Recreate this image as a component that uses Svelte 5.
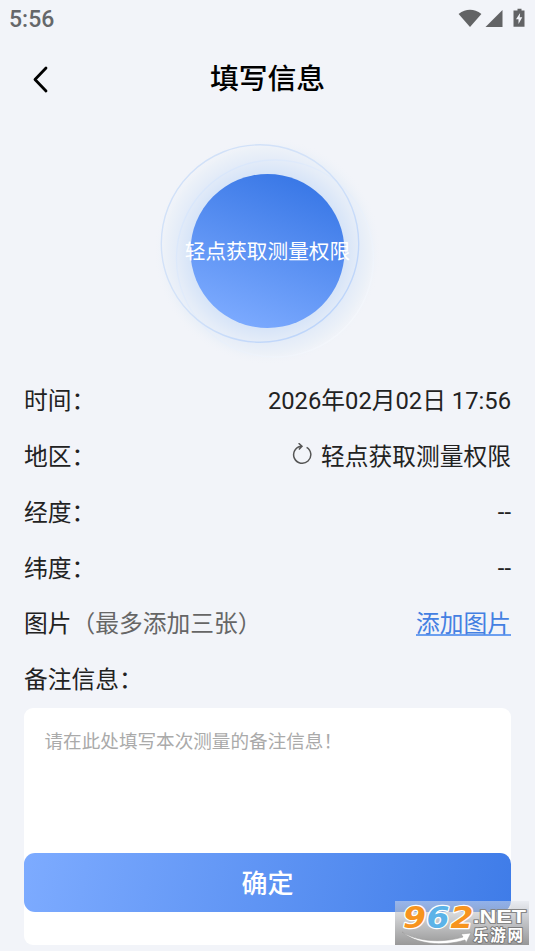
<script>
  let time = "2026年02月02日 17:56";
  let region = "轻点获取测量权限";
  let longitude = "--";
  let latitude = "--";
  let remark = "";
</script>

<div class="page">
  <div class="status-bar">
    <span class="clock">5:56</span>
    <svg class="status-icons" width="70" height="20" viewBox="0 0 70 20">
      <path d="M0.6 5 Q12 -3.4 23.4 5 L12 18 Z" transform="translate(0 1)" />
      <path d="M27.5 19 L44.5 2 V19 Z" />
      <path
        fill-rule="evenodd"
        d="M58 2.5 H59.5 V0.8 H63.5 V2.5 H66.5 V18.8 H55.5 V2.5 Z M62.1 5 L58 11.3 H60.5 V16 L64.3 9.3 H61.7 Z"
      />
    </svg>
  </div>

  <header class="nav">
    <button class="back" aria-label="返回">
      <svg width="20" height="30" viewBox="0 0 20 30">
        <path d="M15 4 L4 15.5 L15 27" />
      </svg>
    </button>
    <h1 class="title">填写信息</h1>
  </header>

  <div class="measure">
    <svg class="rings" width="235" height="235" viewBox="150 130 235 235">
      <defs>
        <linearGradient id="disc" x1="0.7" y1="0" x2="0.3" y2="1">
          <stop offset="0.05" stop-color="#3b79e7" />
          <stop offset="1" stop-color="#7dabff" />
        </linearGradient>
        <radialGradient id="glow">
          <stop offset="0.67" stop-color="#d6e4f8" />
          <stop offset="0.8" stop-color="#e4ecf8" />
          <stop offset="0.9" stop-color="#ecf1f8" />
          <stop offset="1" stop-color="#f2f4f9" stop-opacity="0" />
        </radialGradient>
        <linearGradient id="ring" x1="0" y1="0" x2="1" y2="1">
          <stop offset="0" stop-color="#d0e0f8" />
          <stop offset="0.45" stop-color="#d3e2f8" />
          <stop offset="1" stop-color="#b5d0fb" />
        </linearGradient>
        <linearGradient id="halo" x1="0" y1="0" x2="1" y2="1">
          <stop offset="0" stop-color="#d3e3fb" />
          <stop offset="0.5" stop-color="#e6eefa" />
          <stop offset="1" stop-color="#f9fafc" />
        </linearGradient>
      </defs>
      <circle cx="267.5" cy="251" r="114" fill="url(#glow)" />
      <circle cx="275" cy="258.5" r="98.5" class="line" stroke="url(#halo)" />
      <circle cx="260" cy="243.5" r="98.7" class="line" stroke="url(#ring)" />
      <circle cx="267.5" cy="251" r="77" fill="url(#disc)" />
    </svg>
    <span class="measure-text">{region}</span>
  </div>

  <main class="form">
    <div class="row"><span>时间：</span><span>{time}</span></div>
    <div class="row">
      <span>地区：</span>
      <span class="region">
        <svg width="22" height="24" viewBox="0 0 22 24">
          <path d="M15.6 4.3 A8.6 8.6 0 1 1 10 3.2 M7.6 0.2 L11 3.3 L7.9 6.6" />
        </svg>
        {region}
      </span>
    </div>
    <div class="row"><span>经度：</span><span class="coord">{longitude}</span></div>
    <div class="row"><span>纬度：</span><span class="coord">{latitude}</span></div>
    <div class="row">
      <span>图片<span class="hint">（最多添加三张）</span></span>
      <span class="link">添加图片</span>
    </div>
    <div class="row"><span>备注信息：</span></div>
    <textarea
      class="remark"
      placeholder="请在此处填写本次测量的备注信息！"
      bind:value={remark}
    ></textarea>
  </main>

  <button class="submit">确定</button>

  <div class="watermark">
    <svg width="134" height="44" viewBox="0 0 134 44">
      <g class="number">
        <text x="8" y="26.5" textLength="23" lengthAdjust="spacingAndGlyphs" fill="#f7941e">9</text>
        <text x="31.5" y="26.5" textLength="23" lengthAdjust="spacingAndGlyphs" fill="#5cb3e8">6</text>
        <text x="55.5" y="26.5" textLength="23" lengthAdjust="spacingAndGlyphs" fill="#f7941e">2</text>
      </g>
      <path
        class="swoosh"
        d="M7 31 C23 41 48 42 68 36 L66 33 L76 32 L71 42 L70 39 C47 46 21 43 7 31 Z"
      />
      <text class="net" x="78" y="22" textLength="53" lengthAdjust="spacingAndGlyphs">.NET</text>
      <text class="name" x="78" y="39.5" textLength="50">乐游网</text>
    </svg>
  </div>
</div>

<style>
  :global(body) {
    background: #f2f4f9;
    overflow: hidden;
  }

  .page {
    position: relative;
    height: 951px;
    box-sizing: border-box;
    overflow: hidden;
    background: #f2f4f9;
    color: #222;
    font-family: Roboto, "Noto Sans CJK SC", sans-serif;
  }

  .status-bar {
    display: flex;
    justify-content: space-between;
    align-items: center;
    height: 36px;
    padding: 0 7px 0 9px;
    color: #65676a;
  }

  .clock {
    font-size: 23px;
    font-weight: 500;
    padding-top: 2px;
  }

  .status-icons {
    fill: #626365;
  }

  .nav {
    display: grid;
    grid-template-columns: 60px 1fr 60px;
    align-items: center;
    height: 86px;
  }

  .back {
    justify-self: end;
    display: flex;
    border: none;
    background: none;
    padding: 0 9px 0 0;
    cursor: pointer;
  }

  .back path {
    fill: none;
    stroke: #000;
    stroke-width: 2.8;
    stroke-linecap: round;
    stroke-linejoin: round;
  }

  .title {
    margin: 0;
    text-align: center;
    font-size: 28.8px;
    font-weight: 500;
    line-height: 40px;
    color: #000;
  }

  .measure {
    display: grid;
    align-items: start;
    justify-items: center;
    margin-top: 8px;
    height: 241px;
  }

  .rings,
  .measure-text {
    grid-area: 1 / 1;
  }

  .line {
    fill: none;
    stroke-width: 1.4;
  }

  .measure-text {
    color: #fff;
    font-size: 20.7px;
    line-height: 245px;
  }

  .form {
    display: flex;
    flex-direction: column;
    padding: 0 24px;
  }

  .row {
    display: flex;
    justify-content: space-between;
    align-items: center;
    height: 55.75px;
    font-size: 23.75px;
  }

  .region {
    display: flex;
    align-items: center;
    gap: 8px;
  }

  .region path {
    fill: none;
    stroke: #555;
    stroke-width: 1.5;
  }

  .coord {
    padding-top: 3px;
  }

  .hint {
    color: #666;
  }

  .link {
    color: #4480e2;
    text-decoration: underline;
    text-decoration-color: #6c9ff0;
    text-decoration-thickness: 2px;
    text-underline-offset: 2px;
    text-decoration-skip-ink: none;
  }

  .remark {
    height: 237px;
    margin-top: 2px;
    box-sizing: border-box;
    padding: 20px 20.5px;
    border: none;
    border-radius: 9px;
    background: #fff;
    resize: none;
    outline: none;
    font-family: inherit;
    font-size: 18.6px;
    line-height: 28px;
  }

  .remark::placeholder {
    color: #aaa;
  }

  .submit {
    position: absolute;
    left: 24px;
    right: 24px;
    bottom: 39px;
    height: 59px;
    padding: 0 0 3px;
    border: none;
    border-radius: 11px;
    background: linear-gradient(100deg, #7dabff, #3f7ce8);
    color: #fff;
    font-family: inherit;
    font-size: 26px;
    font-weight: 500;
  }

  .watermark {
    position: absolute;
    right: 6px;
    bottom: 6px;
    width: 134px;
    height: 44px;
    background: linear-gradient(rgba(225, 228, 235, 0.5), rgba(135, 135, 135, 0.85));
  }

  .watermark svg {
    display: block;
    overflow: visible;
  }

  .watermark text {
    paint-order: stroke;
    stroke-linejoin: round;
  }

  .number {
    font: italic bold 30px "DejaVu Sans", sans-serif;
    stroke: #fff;
    stroke-width: 2.5px;
  }

  .net {
    font: bold 18.5px "Liberation Sans", sans-serif;
    fill: #fff;
    stroke: #858585;
    stroke-width: 2px;
  }

  .name {
    font: bold 15.5px "Noto Sans CJK SC", sans-serif;
    fill: #fff;
    stroke: #7b7b7b;
    stroke-width: 2px;
  }

  .swoosh {
    fill: #fff;
    stroke: #999;
    stroke-width: 0.6;
  }
</style>
